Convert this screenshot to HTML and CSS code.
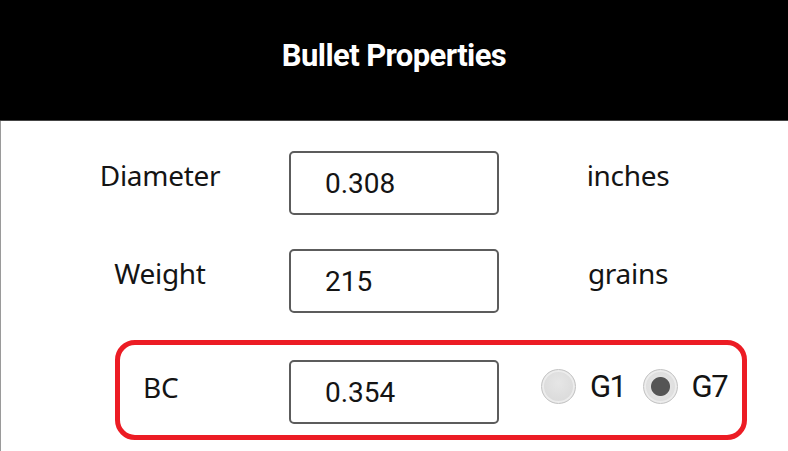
FILE: index.html
```html
<!DOCTYPE html>
<html>

<head>
    <meta charset="UTF-8">
    <title>Bullet Properties</title>
    <link rel="stylesheet" href="styles.css">
</head>

<body>

<div id="header">Bullet Properties</div>

<div id="main">
    <div class="row">
        <label class="label" for="diameter">Diameter</label>
        <input class="field" id="diameter" type="text" value="0.308">
        <span class="unit">inches</span>
    </div>
    <div class="row">
        <label class="label" for="weight">Weight</label>
        <input class="field" id="weight" type="text" value="215">
        <span class="unit">grains</span>
    </div>
    <div class="row bc">
        <label class="label" for="bc">BC</label>
        <input class="field" id="bc" type="text" value="0.354">
        <div class="drag">
            <label class="opt"><input type="radio" name="drag" value="g1"><span>G1</span></label>
            <label class="opt"><input type="radio" name="drag" value="g7" checked><span>G7</span></label>
        </div>
    </div>
</div>

</body>

</html>
```

FILE: styles.css
```css
* {
    margin: 0;
    padding: 0;
    box-sizing: border-box;
}
body {
    width: 788px;
    height: 451px;
    overflow: hidden;
    background: #fff;
    color: #141414;
    font-family: "Noto Sans", sans-serif;
}
#header {
    height: 121px;
    padding-top: 36px;
    border-bottom: 1px solid #454545;
    background: #000;
    color: #fff;
    text-align: center;
    font-family: Roboto, sans-serif;
    font-weight: bold;
    font-size: 31px;
    line-height: 40px;
    letter-spacing: -0.6px;
}
#main {
    height: 330px;
    padding-top: 30px;
    border-left: 1px solid #9a9a9a;
}
.row {
    display: grid;
    grid-template-columns: 249px 210px 258px;
    align-items: start;
    padding-left: 39px;
    margin-bottom: 34px;
}
.label,
.unit {
    padding-top: 10px;
    font-size: 28px;
    line-height: 1;
    letter-spacing: -0.3px;
    text-align: center;
}
.label {
    padding-right: 9px;
}
.field {
    height: 64px;
    width: 210px;
    padding-left: 34px;
    border: 2px solid #5c5c5c;
    border-radius: 5px;
    background: #fff;
    color: #141414;
    font-family: Roboto, sans-serif;
    font-size: 28px;
    outline: none;
}
.bc {
    width: 632px;
    margin: -7px 0 0 114px;
    padding: 15px 0 11px 0;
    grid-template-columns: 169px 210px auto;
    border: 5px solid #ec1c24;
    border-radius: 20px;
}
.bc .label {
    padding: 13px 0 0 23px;
    text-align: left;
}
.drag {
    display: flex;
    align-items: center;
    padding: 8px 0 0 42px;
}
.opt {
    display: flex;
    align-items: center;
    margin-right: 17px;
    font-family: Roboto, sans-serif;
    font-size: 31px;
    letter-spacing: -1.5px;
}
.opt input {
    -webkit-appearance: none;
    appearance: none;
    width: 35px;
    height: 35px;
    margin-right: 14px;
    border: 1px solid #c4c4c4;
    border-radius: 50%;
    background: radial-gradient(circle at 50% 40%, #e6e6e6, #d6d6d6);
    box-shadow: inset 0 0 0 2px #ececec;
}
.opt input:checked {
    background: radial-gradient(circle, #555 0, #555 9px, #e2e2e2 10px, #d8d8d8 100%);
}
```
